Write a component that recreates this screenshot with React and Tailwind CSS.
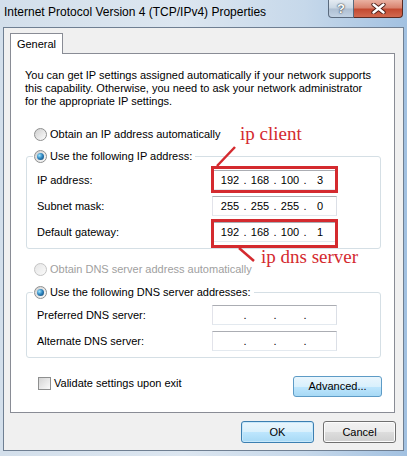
import React from "react";

function Radio({ checked, disabled }) {
  return (
    <span
      className={
        "w-[13px] h-[13px] rounded-full border flex items-center justify-center shrink-0 " +
        (disabled
          ? "border-[#c4c4c4] bg-[linear-gradient(135deg,#e6e6e6,#fafafa)]"
          : "border-[#8e8f8f] bg-[linear-gradient(135deg,#cfcfcf,#fdfdfd)]")
      }
    >
      {checked && (
        <span className="w-[7px] h-[7px] rounded-full bg-[radial-gradient(circle_at_35%_35%,#9fe6ff_0%,#2f86c1_45%,#0f3d63_100%)]" />
      )}
    </span>
  );
}

function IpBox({ vals }) {
  const v = vals || ["", "", "", ""];
  return (
    <div className="flex items-center w-[125px] h-[20px] border border-[#abadb3] border-l-[#e2e3ea] border-r-[#dbdfe6] border-b-[#e3e9ef] bg-white pl-[4px] text-black">
      {v.map((s, i) => (
        <React.Fragment key={i}>
          <span className="w-[26px] text-center leading-[18px]">{s}</span>
          {i < 3 && <span className="w-[4px] text-center leading-[18px]">.</span>}
        </React.Fragment>
      ))}
    </div>
  );
}

function Row({ label, vals }) {
  return (
    <div className="h-[26px] flex items-center">
      <span className="w-[179px] pl-[4px]">{label}</span>
      <IpBox vals={vals} />
    </div>
  );
}

export default function App() {
  return (
    <div className="relative w-[407px] h-[456px] overflow-hidden font-['Liberation_Sans',Arial,sans-serif] text-[11px] text-black bg-[linear-gradient(90deg,#d3dfeb_0%,#dce6f0_45%,#c6d8ea_75%,#a2c1e1_100%)]">
      {/* title bar */}
      <div className="h-[27px] flex items-start justify-between">
        <div className="pl-[4px] pt-[4px] leading-[16px] text-[12px] whitespace-nowrap">
          Internet Protocol Version 4 (TCP/IPv4) Properties
        </div>
        <div className="flex mr-[4px]">
          <div className="w-[26px] h-[18px] border border-[#5a6a7d] border-t-0 rounded-bl-[4px] bg-[linear-gradient(180deg,#e4ebf2_0%,#c9d6e3_48%,#aebfd2_52%,#c3d3e4_100%)] flex items-center justify-center">
            <span className="text-white font-bold text-[13px] leading-none [text-shadow:0_0_2px_#2c3640,0_0_1px_#2c3640]">?</span>
          </div>
          <div className="w-[49px] h-[18px] border border-[#5a2a22] border-t-0 border-l-0 rounded-br-[4px] bg-[linear-gradient(180deg,#eab1a2_0%,#d98470_45%,#c34a31_55%,#d2694f_100%)] flex items-center justify-center">
            <svg width="15" height="11" viewBox="0 0 15 11">
              <path d="M2.5 1.5 L12.5 9.5 M12.5 1.5 L2.5 9.5" stroke="#4a1b14" strokeWidth="4.2" strokeLinecap="round" />
              <path d="M2.5 1.5 L12.5 9.5 M12.5 1.5 L2.5 9.5" stroke="#ffffff" strokeWidth="2.4" strokeLinecap="round" />
            </svg>
          </div>
        </div>
      </div>

      {/* client area */}
      <div className="ml-[3px] w-[401px] h-[424px] border border-[#6f7f92] bg-[#f0f0f0] pt-[5px]">
        <div className="ml-[6px] relative z-10 -mb-[1px] w-[53px] h-[21px] border border-b-0 border-[#898c95] bg-white flex items-center justify-center">
          General
        </div>
        <div className="ml-[6px] w-[385px] h-[360px] border border-[#898c95] bg-white">
          <p className="pt-[15px] pl-[14px] leading-[13px] whitespace-nowrap">
            You can get IP settings assigned automatically if your network supports
            <br />
            this capability. Otherwise, you need to ask your network administrator
            <br />
            for the appropriate IP settings.
          </p>

          <div className="mt-[20px] ml-[23px] h-[13px] flex items-center gap-[3px]">
            <Radio />
            <span>Obtain an IP address automatically</span>
          </div>

          <fieldset className="mt-[9px] ml-[15px] w-[355px] border border-[#d5dfe5] rounded-[3px] pl-[6px] pb-[3px]">
            <legend className="pl-[1px] pr-[3px] h-[13px] flex items-center gap-[3px] bg-white">
              <Radio checked />
              <span>Use the following IP address:</span>
            </legend>
            <div className="mt-[4px]">
              <Row label="IP address:" vals={["192", "168", "100", "3"]} />
              <Row label="Subnet mask:" vals={["255", "255", "255", "0"]} />
              <Row label="Default gateway:" vals={["192", "168", "100", "1"]} />
            </div>
          </fieldset>

          <div className="mt-[14px] ml-[23px] h-[13px] flex items-center gap-[3px] text-[#a0a0a0]">
            <Radio disabled />
            <span>Obtain DNS server address automatically</span>
          </div>

          <fieldset className="mt-[10px] ml-[15px] w-[355px] border border-[#d5dfe5] rounded-[3px] pl-[6px] pb-[3px]">
            <legend className="pl-[1px] pr-[3px] h-[13px] flex items-center gap-[3px] bg-white">
              <Radio checked />
              <span>Use the following DNS server addresses:</span>
            </legend>
            <div className="mt-[3px]">
              <Row label="Preferred DNS server:" />
              <Row label="Alternate DNS server:" />
            </div>
          </fieldset>

          <div className="mt-[18px] ml-[27px] mr-[12px] flex items-start justify-between">
            <div className="mt-[1px] flex items-center gap-[3px] h-[13px]">
              <span className="w-[13px] h-[13px] border border-[#8e8f8f] bg-[linear-gradient(135deg,#d4d4d4,#fbfbfb)] shrink-0" />
              <span>Validate settings upon exit</span>
            </div>
            <div className="w-[89px] h-[21px] rounded-[3px] border border-[#5d9bc6] bg-[linear-gradient(180deg,#eaf6fd_0%,#d9f0fc_50%,#bee6fd_50%,#a7d9f5_100%)] flex items-center justify-center">
              Advanced...
            </div>
          </div>
        </div>

        <div className="mt-[8px] pr-[7px] flex justify-end gap-[9px]">
          <div className="w-[73px] h-[22px] rounded-[3px] border border-[#3c7fb1] bg-[linear-gradient(180deg,#eaf6fd_0%,#d9f0fc_50%,#bee6fd_50%,#a7d9f5_100%)] shadow-[inset_0_0_0_1px_#c7e8fb] flex items-center justify-center">
            OK
          </div>
          <div className="w-[73px] h-[22px] rounded-[3px] border border-[#707070] bg-[linear-gradient(180deg,#f2f2f2_0%,#ebebeb_50%,#dddddd_50%,#cfcfcf_100%)] shadow-[inset_0_0_0_1px_#fcfcfc] flex items-center justify-center">
            Cancel
          </div>
        </div>
      </div>

      {/* annotations */}
      <div className="absolute left-[211px] top-[166px] w-[127px] h-[27px] border-[3px] border-[#d42a2f]" />
      <div className="absolute left-[211px] top-[219px] w-[127px] h-[29px] border-[3px] border-[#d42a2f]" />
      <svg className="absolute left-0 top-0" width="407" height="456">
        <line x1="235" y1="147" x2="217" y2="166" stroke="#d42a2f" strokeWidth="2.5" />
        <line x1="239" y1="248" x2="254" y2="261" stroke="#d42a2f" strokeWidth="2.5" />
      </svg>
      <div className="absolute left-[240px] top-[124px] font-['Liberation_Serif',serif] text-[19px] leading-[20px] text-[#d42a2f]">
        ip client
      </div>
      <div className="absolute left-[261px] top-[247px] font-['Liberation_Serif',serif] text-[19px] leading-[20px] text-[#d42a2f]">
        ip dns server
      </div>
    </div>
  );
}
